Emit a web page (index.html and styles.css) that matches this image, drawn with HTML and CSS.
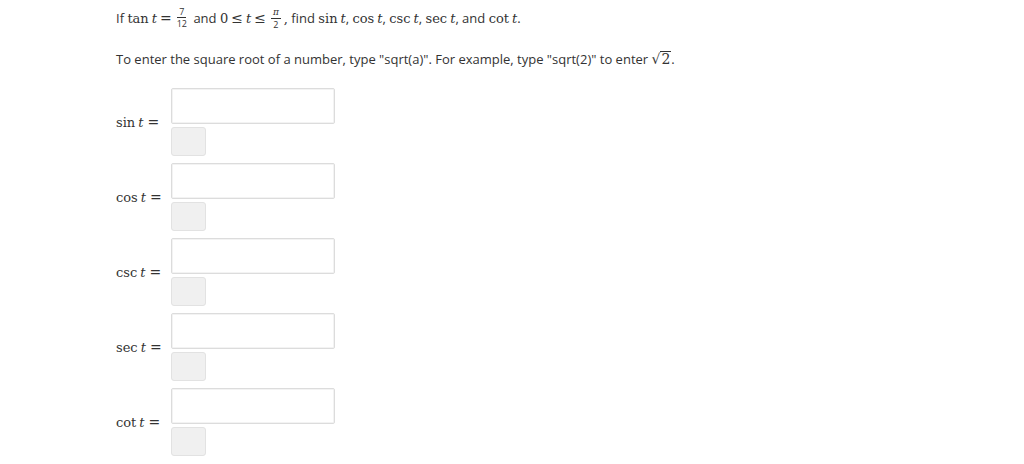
FILE: index.html
```html
<!DOCTYPE html>
<html>
<head>
<meta charset="utf-8">
<link rel="stylesheet" href="styles.css">
</head>
<body>
<div class="page">
  <p class="q">If <span class="m">tan<i class="v">t</i><span class="rel">=</span></span><span class="frac"><span class="num">7</span><span class="den">12</span></span> and <span class="m">0<span class="rel">≤</span><i>t</i><span class="rel">≤</span></span><span class="frac"><span class="num"><i>π</i></span><span class="den">2</span></span><span class="m">,</span> find <span class="m">sin<i class="v">t</i></span>, <span class="m">cos<i class="v">t</i></span>, <span class="m">csc<i class="v">t</i></span>, <span class="m">sec<i class="v">t</i></span>, and <span class="m">cot<i class="v">t</i></span>.</p>
  <p class="hint">To enter the square root of a number, type "sqrt(a)". For example, type "sqrt(2)" to enter <span class="m sqrt"><span class="rad">√</span><span class="under">2</span></span>.</p>
  <div class="rows">
    <div class="row"><span class="lbl">sin<i class="v">t</i><span class="rel">=</span></span><div class="field"><div class="box"></div><div class="btn"></div></div></div>
    <div class="row"><span class="lbl">cos<i class="v">t</i><span class="rel">=</span></span><div class="field"><div class="box"></div><div class="btn"></div></div></div>
    <div class="row"><span class="lbl">csc<i class="v">t</i><span class="rel">=</span></span><div class="field"><div class="box"></div><div class="btn"></div></div></div>
    <div class="row"><span class="lbl">sec<i class="v">t</i><span class="rel">=</span></span><div class="field"><div class="box"></div><div class="btn"></div></div></div>
    <div class="row"><span class="lbl">cot<i class="v">t</i><span class="rel">=</span></span><div class="field"><div class="box"></div><div class="btn"></div></div></div>
  </div>
</div>
</body>
</html>
```
FILE: styles.css
```css
html, body { margin: 0; padding: 0; background: #fff; }
body { font-family: "Open Sans", sans-serif; color: #333; font-size: 13px; }
.page { padding: 8px 0 0 116px; }
.q { margin: 0; line-height: 20px; }
.hint { margin: 18px 0 0 0; line-height: 20px; }
.m { font-family: "DejaVu Serif", "Liberation Serif", serif; font-size: 13px; line-height: 14px; }
.m i { font-style: italic; }
.v { margin-left: 3px; }
.rel { margin: 0 4px; font-size: 14px; }
.q .rel { margin: 0 3px; }
.frac { display: inline-flex; flex-direction: column; align-items: center; vertical-align: middle; font-size: 9px; line-height: 9px; margin: 0 3px 0 2px; position: relative; top: -2px; }
.frac .num { padding: 0 2px 1px; border-bottom: 1px solid #333; font-family: "Open Sans", sans-serif; }
.frac .num i { font-family: "DejaVu Serif", serif; font-style: italic; }
.frac .den { font-family: "Open Sans", sans-serif; padding-top: 1px; }
.sqrt { display: inline-flex; align-items: flex-end; }
.rad { font-size: 14px; }
.under { border-top: 1px solid #333; line-height: 14px; padding: 0 1px; font-size: 14px; }
.rows { display: flex; flex-direction: column; gap: 7px; margin-top: 19px; }
.row { display: flex; align-items: center; }
.lbl { font-family: "DejaVu Serif", "Liberation Serif", serif; font-size: 13px; width: 55px; color: #333; }
.lbl i { font-style: italic; }
.field { display: flex; flex-direction: column; gap: 3px; }
.box { width: 162px; height: 34px; border: 1px solid #dcdcdc; border-radius: 2px; box-shadow: inset 0 0 0 1px #f3f3f3; background: #fff; }
.btn { width: 33px; height: 27px; border: 1px solid #e2e2e2; border-radius: 3px; background: #f0f0f0; }
```
